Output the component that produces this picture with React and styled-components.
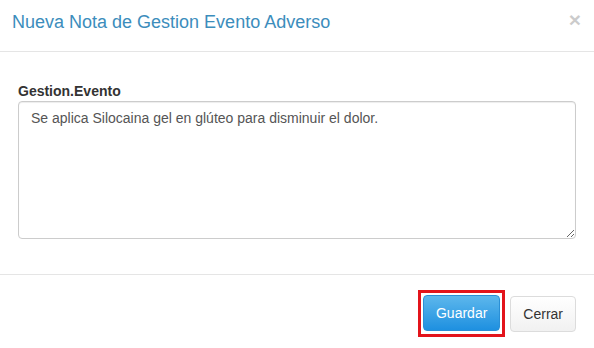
import React from "react";
import styled, { createGlobalStyle } from "styled-components";

const Global = createGlobalStyle`
  html, body { margin: 0; padding: 0; background: #fff; }
  body { font-family: "Liberation Sans", Arial, sans-serif; font-size: 14px; color: #333; }
  * { box-sizing: border-box; }
`;

const Modal = styled.div`
  width: 594px;
  background: #fff;
`;

const Header = styled.div`
  display: flex;
  justify-content: space-between;
  align-items: flex-start;
  padding: 9px 13px 16px 12px;
  border-bottom: 1px solid #e5e5e5;
`;

const Title = styled.h4`
  margin: 0;
  font-size: 18px;
  line-height: 26px;
  font-weight: normal;
  color: #3c8dbc;
`;

const Close = styled.button`
  border: 0;
  background: transparent;
  padding: 0;
  margin: 0;
  font-family: "Liberation Sans", Arial, sans-serif;
  font-size: 21px;
  font-weight: bold;
  line-height: 1;
  color: #000;
  opacity: 0.2;
  cursor: pointer;
`;

const Body = styled.div`
  padding: 29px 18px 35px 18px;
`;

const Label = styled.label`
  display: block;
  font-weight: bold;
  font-size: 14px;
  line-height: 20px;
  color: #333;
`;

const TextArea = styled.textarea`
  display: block;
  width: 100%;
  height: 138px;
  padding: 6px 12px;
  font-family: "Liberation Sans", Arial, sans-serif;
  font-size: 14px;
  line-height: 20px;
  color: #555;
  border: 1px solid #ccc;
  border-radius: 4px;
  box-shadow: inset 0 1px 1px rgba(0, 0, 0, 0.075);
  resize: both;
  outline: none;
  margin: 0;
`;

const Footer = styled.div`
  display: flex;
  justify-content: flex-end;
  align-items: center;
  gap: 5px;
  padding: 15px 18px 11px 18px;
  border-top: 1px solid #e5e5e5;
`;

const Highlight = styled.div`
  display: flex;
  border: 3px solid #e3141b;
  padding: 2px 2px 3px 2px;
`;

const Button = styled.button`
  font-family: "Liberation Sans", Arial, sans-serif;
  font-size: 14px;
  line-height: 20px;
  padding: 7px 12px;
  height: 36px;
  border-radius: 4px;
  cursor: pointer;
  border: 1px solid ${(p) => (p.$primary ? "#2a8fd6" : "#dcdcdc")};
  color: ${(p) => (p.$primary ? "#fff" : "#333")};
  background: ${(p) =>
    p.$primary
      ? "linear-gradient(to bottom, #5db7ec 0%, #1e90e0 100%)"
      : "linear-gradient(to bottom, #ffffff 0%, #f1f1f1 100%)"};
`;

export default function App() {
  return (
    <>
      <Global />
      <Modal>
        <Header>
          <Title>Nueva Nota de Gestion Evento Adverso</Title>
          <Close aria-label="Close">×</Close>
        </Header>
        <Body>
          <Label>Gestion.Evento</Label>
          <TextArea defaultValue="Se aplica Silocaina gel en glúteo para disminuir el dolor." />
        </Body>
        <Footer>
          <Highlight>
            <Button $primary>Guardar</Button>
          </Highlight>
          <Button>Cerrar</Button>
        </Footer>
      </Modal>
    </>
  );
}
